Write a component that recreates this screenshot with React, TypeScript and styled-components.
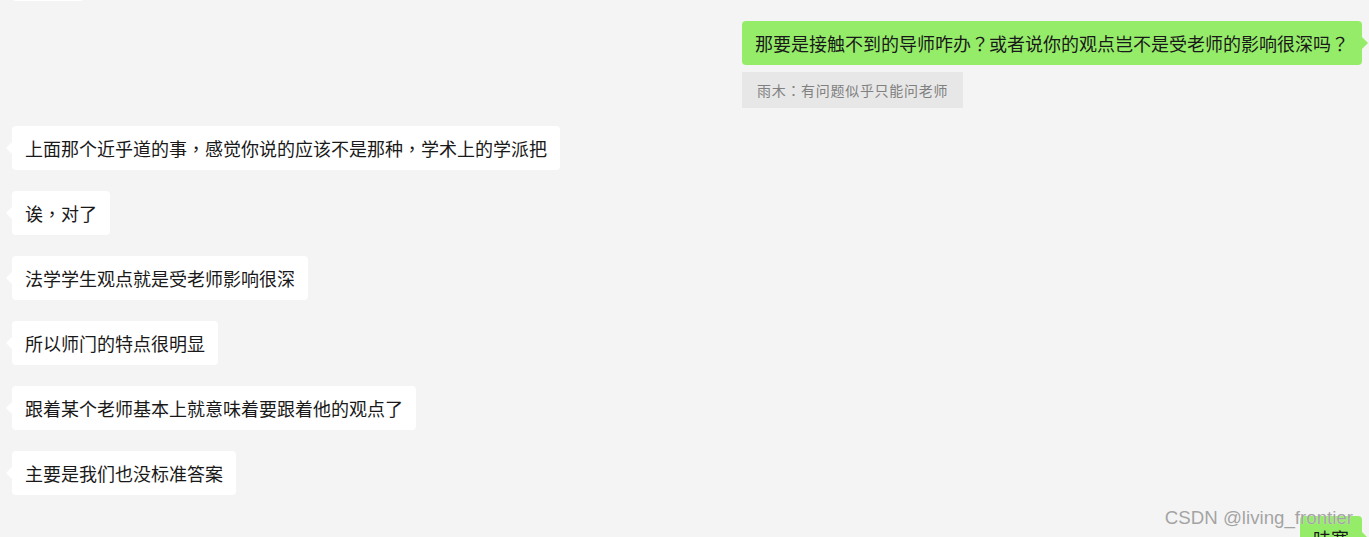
import React from "react";
import styled, { createGlobalStyle, css } from "styled-components";

const GlobalStyle = createGlobalStyle`
  html, body {
    margin: 0;
    padding: 0;
    background: #f4f4f4;
  }
  body {
    font-family: "Noto Sans CJK SC", "Liberation Sans", sans-serif;
  }
`;

type Side = "left" | "right";

type Message = {
  side: Side;
  text: string;
  quote?: string;
  space: number;
};

const messages: Message[] = [
  { side: "left", text: "对的~", space: 0 },
  {
    side: "right",
    text: "那要是接触不到的导师咋办？或者说你的观点岂不是受老师的影响很深吗？",
    quote: "雨木：有问题似乎只能问老师",
    space: 20,
  },
  { side: "left", text: "上面那个近乎道的事，感觉你说的应该不是那种，学术上的学派把", space: 18 },
  { side: "left", text: "诶，对了", space: 21 },
  { side: "left", text: "法学学生观点就是受老师影响很深", space: 21 },
  { side: "left", text: "所以师门的特点很明显", space: 21 },
  { side: "left", text: "跟着某个老师基本上就意味着要跟着他的观点了", space: 21 },
  { side: "left", text: "主要是我们也没标准答案", space: 21 },
  { side: "right", text: "味寒", space: 21 },
];

const Page = styled.div`
  position: relative;
  width: 100%;
  height: 537px;
  overflow: hidden;
  background: #f4f4f4;
`;

const List = styled.div`
  display: flex;
  flex-direction: column;
  margin-top: -43px;
`;

const Row = styled.div<{ $side: Side; $space: number }>`
  display: flex;
  justify-content: ${(p) => (p.$side === "left" ? "flex-start" : "flex-end")};
  margin-top: ${(p) => p.$space}px;
  padding: ${(p) => (p.$side === "left" ? "0 0 0 12px" : "0 7px 0 0")};
`;

const Group = styled.div`
  display: flex;
  flex-direction: column;
  align-items: flex-start;
  gap: 7px;
`;

const Bubble = styled.div<{ $side: Side }>`
  position: relative;
  box-sizing: border-box;
  height: 44px;
  padding: 10px 13px;
  border-radius: 4px;
  font-size: 18px;
  line-height: 24px;
  color: #191919;
  white-space: nowrap;
  background: ${(p) => (p.$side === "left" ? "#ffffff" : "#95ec69")};

  &::before {
    content: "";
    position: absolute;
    top: 16px;
    border-top: 6px solid transparent;
    border-bottom: 6px solid transparent;
    ${(p) =>
      p.$side === "left"
        ? css`
            left: -6px;
            border-right: 6px solid #ffffff;
          `
        : css`
            right: -6px;
            border-left: 6px solid #95ec69;
          `}
  }
`;

// full-width punctuation sits centred in the cell, as in the reference
const Punct = styled.span`
  font-family: "Noto Sans CJK TC", sans-serif;
`;

const Quote = styled.div`
  box-sizing: border-box;
  height: 36px;
  padding: 0 15px;
  font-size: 14px;
  line-height: 36px;
  letter-spacing: 0.7px;
  color: #808080;
  background: #e7e7e7;
  white-space: nowrap;
`;

const Watermark = styled.div`
  position: absolute;
  right: 16px;
  bottom: 8px;
  font-family: "Liberation Sans", Arial, sans-serif;
  font-size: 18.7px;
  color: #a3a3a3;
  text-shadow: 0 0 1px rgba(255, 255, 255, 0.8);
  pointer-events: none;
`;

const withPunct = (text: string) =>
  text.split(/([，？：])/).map((part, i) =>
    /^[，？：]$/.test(part) ? <Punct key={i}>{part}</Punct> : part
  );

export default function App() {
  return (
    <Page>
      <GlobalStyle />
      <List>
        {messages.map((m, i) => (
          <Row key={i} $side={m.side} $space={m.space}>
            {m.quote ? (
              <Group>
                <Bubble $side={m.side}>{withPunct(m.text)}</Bubble>
                <Quote>{withPunct(m.quote)}</Quote>
              </Group>
            ) : (
              <Bubble $side={m.side}>{withPunct(m.text)}</Bubble>
            )}
          </Row>
        ))}
      </List>
      <Watermark>CSDN @living_frontier</Watermark>
    </Page>
  );
}
